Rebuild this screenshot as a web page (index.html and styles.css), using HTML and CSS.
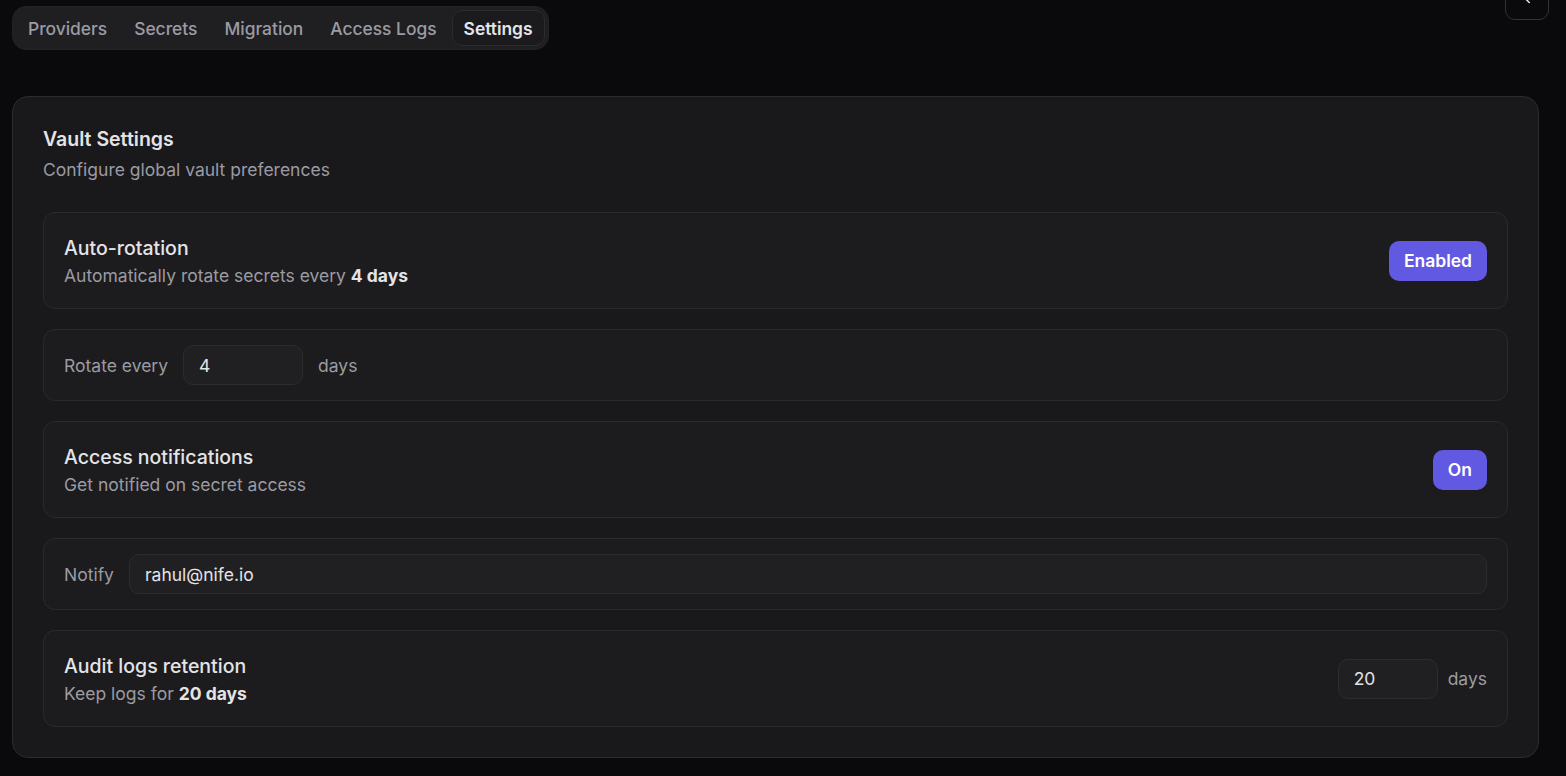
FILE: index.html
```html
<!DOCTYPE html>
<html>
<head>
    <meta name="viewport" content="width=device-width, initial-scale=1">
    <link rel="stylesheet" href="styles.css">
</head>
<body>

<div class="topbar">
    <nav class="tabs">
        <a class="tab">Providers</a>
        <a class="tab">Secrets</a>
        <a class="tab">Migration</a>
        <a class="tab">Access Logs</a>
        <a class="tab active">Settings</a>
    </nav>
    <button class="back-btn" type="button">
        <svg width="18" height="18" viewBox="0 0 24 24" fill="none" stroke="currentColor" stroke-width="2" stroke-linecap="round" stroke-linejoin="round"><path d="M15 18l-6-6 6-6"/></svg>
    </button>
</div>

<div class="card">
    <h3 class="card-title">Vault Settings</h3>
    <p class="card-sub">Configure global vault preferences</p>

    <div class="rows">
        <div class="row tall">
            <div>
                <div class="row-title">Auto-rotation</div>
                <div class="row-sub">Automatically rotate secrets every <b>4 days</b></div>
            </div>
            <button class="pill" type="button">Enabled</button>
        </div>

        <div class="row short">
            <span class="label">Rotate every</span>
            <input class="field num" type="text" value="4">
            <span class="label">days</span>
        </div>

        <div class="row tall">
            <div>
                <div class="row-title">Access notifications</div>
                <div class="row-sub">Get notified on secret access</div>
            </div>
            <button class="pill" type="button">On</button>
        </div>

        <div class="row short">
            <span class="label">Notify</span>
            <input class="field wide" type="text" value="rahul@nife.io">
        </div>

        <div class="row tall">
            <div>
                <div class="row-title">Audit logs retention</div>
                <div class="row-sub">Keep logs for <b>20 days</b></div>
            </div>
            <div class="inline">
                <input class="field small" type="text" value="20">
                <span class="label">days</span>
            </div>
        </div>
    </div>
</div>

</body>
</html>
```

FILE: styles.css
```css
body {
    margin: 0;
    padding: 0 27px 0 12px;
    background-color: #0a0a0c;
    font-family: Inter, "Noto Sans", sans-serif;
    color: #e4e4e7;
}

.topbar {
    display: flex;
    justify-content: space-between;
    align-items: flex-start;
    padding-top: 6px;
}

.tabs {
    display: flex;
    gap: 3px;
    padding: 3px;
    background-color: #1f1f22;
    border: 1px solid #232326;
    border-radius: 14px;
}

.tab {
    display: flex;
    align-items: center;
    height: 34px;
    padding: 0 11px;
    font-size: 17.4px;
    font-weight: 500;
    color: #9b9ba3;
    border: 1px solid transparent;
    border-radius: 10px;
}

.tab.active {
    color: #e6e6ea;
    font-weight: 600;
    background-color: #1b1b1e;
    border-color: #2c2c30;
}

.back-btn {
    width: 44px;
    height: 44px;
    margin-top: -30px;
    margin-right: -10px;
    display: flex;
    align-items: center;
    justify-content: center;
    background: transparent;
    color: #e4e4e7;
    border: 1px solid #333337;
    border-radius: 10px;
}

.card {
    margin-top: 46px;
    padding: 28px 30px 30px;
    background-color: #19191b;
    border: 1px solid #2c2c30;
    border-radius: 16px;
}

.card-title {
    margin: 0;
    font-size: 19.5px;
    font-weight: 600;
    line-height: 28px;
}

.card-sub {
    margin: 4px 0 0;
    font-size: 17.5px;
    line-height: 26px;
    color: #9b9ba3;
}

.rows {
    display: flex;
    flex-direction: column;
    gap: 20px;
    margin-top: 29px;
}

.row {
    display: flex;
    align-items: center;
    gap: 15px;
    padding: 0 20px;
    background-color: #1c1c1e;
    border: 1px solid #2a2a2e;
    border-radius: 12px;
}

.row.tall {
    justify-content: space-between;
    height: 95px;
}

.row.short {
    height: 70px;
}

.row-title {
    font-size: 19.5px;
    font-weight: 500;
    line-height: 30px;
    color: #e4e4e7;
}

.row-sub {
    font-size: 17.5px;
    line-height: 26px;
    color: #9b9ba3;
}

.row-sub b {
    color: #e4e4e7;
    font-weight: 700;
}

.label {
    font-size: 17.5px;
    color: #9b9ba3;
}

.pill {
    height: 40px;
    padding: 0 15px;
    background-color: #6159e1;
    color: #ffffff;
    font-family: inherit;
    font-size: 17.5px;
    font-weight: 600;
    border: none;
    border-radius: 10px;
}

.field {
    box-sizing: border-box;
    height: 40px;
    padding: 0 15px;
    background-color: #202023;
    color: #e4e4e7;
    font-family: inherit;
    font-size: 17.5px;
    border: 1px solid #2c2c30;
    border-radius: 10px;
    outline: none;
}

.field.num {
    width: 120px;
}

.field.wide {
    flex: 1;
}

.field.small {
    width: 100px;
}

.inline {
    display: flex;
    align-items: center;
    gap: 10px;
}
```
